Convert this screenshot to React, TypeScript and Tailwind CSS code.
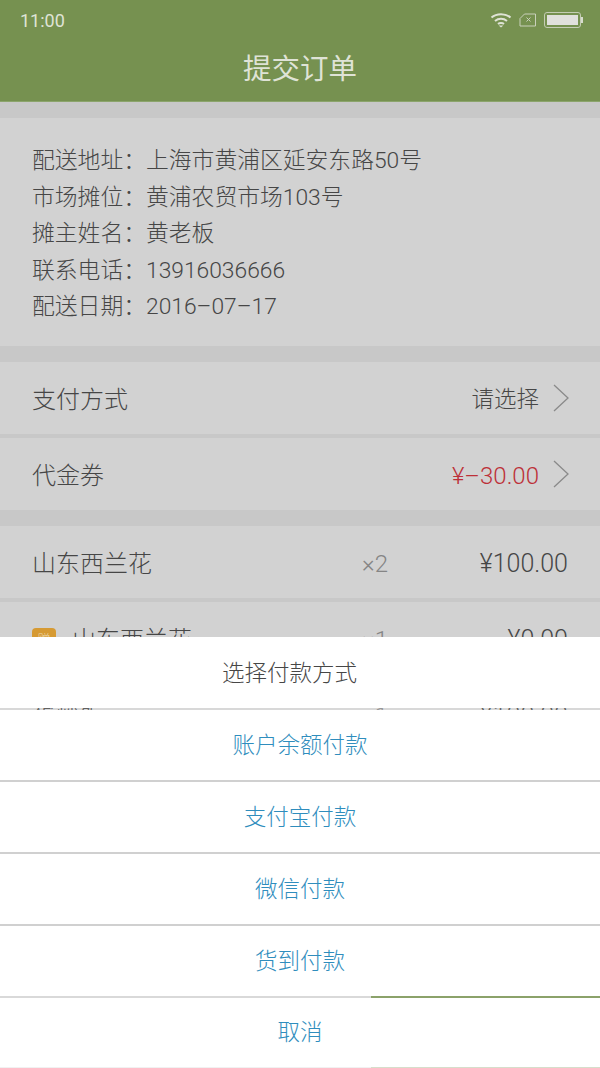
const cjk = { fontFamily: 'Roboto, "Noto Sans CJK SC", sans-serif' };

function Chevron() {
  return (
    <svg width="16" height="28" viewBox="0 0 16 28" fill="none" className="ml-[14px]">
      <path d="M1 1 L15 14 L1 27" stroke="#8a8a8a" strokeWidth="1.3" />
    </svg>
  );
}

function Item({ name, qty, price, gift }: { name: string; qty: string; price: string; gift?: boolean }) {
  return (
    <div className="flex h-[72px] items-center bg-[#d2d2d2] pl-8 pr-8 pt-1 text-[24px] font-light text-[#464646]">
      <div className="flex flex-1 items-center">
        {gift && (
          <span className="mr-[16px] flex h-6 w-6 items-center justify-center rounded bg-[#d69a33] text-[13px] text-[#ecd9b0]">赠</span>
        )}
        {name}
      </div>
      <span className="mr-[80px] text-[#858585]">{qty}</span>
      <span className="w-[100px] text-right text-[25px]">{price}</span>
    </div>
  );
}

export default function App() {
  return (
    <div className="relative h-[1068px] w-[600px] overflow-hidden bg-[#c8c8c8]" style={cjk}>
      <header className="h-[102px] border-b border-[#8ca56c] bg-[#769150] text-[#dfe3d6]">
        <div className="flex h-10 items-center justify-between pl-5 pr-[17px] text-[18px]">
          <span>11:00</span>
          <div className="flex items-center gap-[7px]">
            <svg width="22" height="16" viewBox="0 0 22 16" fill="none" stroke="#dfe3d6" strokeWidth="2">
              <path d="M1.5 5.5C6.5 1 15.5 1 20.5 5.5" />
              <path d="M5 9C8.5 6 13.5 6 17 9" />
              <path d="M8 12C9.5 10.8 12.5 10.8 14 12" />
              <path d="M11 15.5L8.7 13.4H13.3Z" fill="#dfe3d6" stroke="none" />
            </svg>
            <svg width="18" height="14" viewBox="0 0 18 14" fill="none" stroke="#c9d0bb" strokeWidth="1">
              <path d="M5.5 1H16.5V13H1V5.5Z" />
              <path d="M7.5 4.5L11.5 8.5M11.5 4.5L7.5 8.5" />
            </svg>
            <div className="flex items-center">
              <div className="h-[16px] w-[37px] rounded-[3px] border border-[#c4ccb4] bg-[#e0e0dc] bg-clip-content p-[2px]" />
              <div className="h-[6px] w-[2px] bg-[#d8dccf]" />
            </div>
          </div>
        </div>
        <div className="flex h-[54px] items-center justify-center pt-[6px] text-[28.5px]">提交订单</div>
      </header>

      <main className="pt-4">
        <section className="flex h-[228px] flex-col justify-center bg-[#d2d2d2] px-8 pt-[5px] text-[22.8px] font-light leading-[36.4px] text-[#464646]">
          <p>配送地址：上海市黄浦区延安东路50号</p>
          <p>市场摊位：黄浦农贸市场103号</p>
          <p>摊主姓名：黄老板</p>
          <p>联系电话：13916036666</p>
          <p>配送日期：2016–07–17</p>
        </section>

        <section className="mt-4 flex flex-col gap-1">
          <div className="flex h-[72px] items-center justify-between bg-[#d2d2d2] pl-8 pr-[31px] text-[24px] font-light text-[#464646]">
            <span className="pt-1">支付方式</span>
            <div className="flex items-center text-[22.5px]"><span className="pt-1">请选择</span><Chevron /></div>
          </div>
          <div className="flex h-[72px] items-center justify-between bg-[#d2d2d2] pl-8 pr-[31px] text-[24px] font-light text-[#464646]">
            <span className="pt-1">代金券</span>
            <div className="flex items-center text-[24px] text-[#bd3038]"><span className="pt-1">¥–30.00</span><Chevron /></div>
          </div>
        </section>

        <section className="mt-4 flex flex-col gap-1">
          <Item name="山东西兰花" qty="×2" price="¥100.00" />
          <Item name="山东西兰花" qty="×1" price="¥0.00" gift />
          <Item name="蛋炒饭" qty="×1" price="¥100.00" />
        </section>
      </main>

      <div className="absolute inset-x-0 bottom-0 flex h-[72px] bg-[#d2d2d2]">
        <div className="flex-1" />
        <div className="flex w-[229px] items-center justify-center bg-[#769150] text-[24px] text-[#e0e4d8]">提交订单</div>
      </div>

      <div className="absolute inset-x-0 bottom-0 h-[431px] text-[22.5px] font-light">
        <div className="flex h-[71px] items-center justify-center bg-white pr-[21px] pt-[2px] text-[#464646]">选择付款方式</div>
        {["账户余额付款", "支付宝付款", "微信付款", "货到付款", "取消"].map((t) => (
          <div key={t} className="flex h-[72px] items-center justify-center border-t-2 border-white/15 bg-white bg-clip-padding pt-px text-[#2f8dbd] last:border-b last:border-b-white/70">
            {t}
          </div>
        ))}
      </div>
    </div>
  );
}
